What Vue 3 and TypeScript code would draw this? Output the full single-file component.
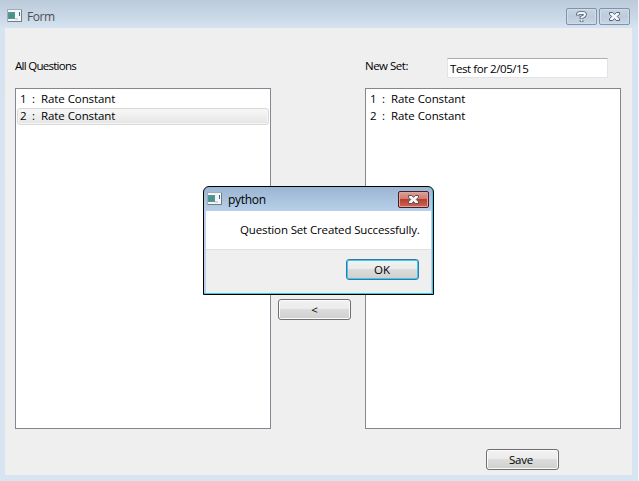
<script setup lang="ts">
import { ref } from 'vue'

interface Question {
  id: number
  title: string
}

const questions = ref<Question[]>([
  { id: 1, title: 'Rate Constant' },
  { id: 2, title: 'Rate Constant' },
])
const newSet = ref<Question[]>([...questions.value])
const selected = ref(2)
const setName = ref('Test for 2/05/15')
const closePath =
  'M1.5 1.5h3.2L6.5 3.4 8.3 1.5h3.2v1.7L9.3 5.5l2.2 2.3v1.7H8.3L6.5 7.6 4.7 9.5H1.5V7.8l2.2-2.3-2.2-2.3z'
</script>

<template>
  <div class="window">
    <header class="titlebar">
      <svg class="app-icon" width="16" height="14" viewBox="0 0 16 14">
        <rect x=".5" y=".5" width="14" height="12" fill="#f4f6f7" stroke="#a4abb2" />
        <path d="M14.5 1v11.5H1" fill="none" stroke="#747b83" />
        <rect x="1" y="3" width="7" height="7" fill="#5b8fae" />
        <path d="M2 9V6l3-2h2v5z" fill="#459a75" />
        <path d="M8 9h3v2H8z" fill="#d2d8da" />
        <path d="M12.5 3v4" stroke="#356b9b" />
      </svg>
      <span class="window-title">Form</span>
      <div class="controls">
        <button class="control" aria-label="Help">
          <svg width="13" height="12" viewBox="0 0 13 12">
            <path d="M3 4.5V3.2Q3 2 5 2h3q2 0 2 1.4T8.2 5.6L6.5 6.5V8M6.5 9v2" fill="none" stroke="#565f74" stroke-width="3.6" />
            <path d="M3 3.8V3.2Q3 2 5 2h3q2 0 2 1.4T8.2 5.6L6.5 6.5V7.6M6.5 9v1.6" fill="none" stroke="#f5f7fa" stroke-width="1.9" />
          </svg>
        </button>
        <button class="control" aria-label="Close">
          <svg width="13" height="11" viewBox="0 0 13 11">
            <path :d="closePath" fill="#f5f7fa" stroke="#565f74" />
          </svg>
        </button>
      </div>
    </header>

    <main class="client">
      <section class="column">
        <div class="heading"><span class="all-label">All Questions</span></div>
        <ul class="list">
          <li v-for="q in questions" :key="q.id" :class="{ selected: q.id === selected }">
            <span class="number">{{ q.id }}</span><span class="colon">:</span><span>{{ q.title }}</span>
          </li>
        </ul>
      </section>
      <div class="transfer"><button class="push">&lt;</button></div>
      <section class="column">
        <div class="heading">
          <span class="set-label">New Set:</span>
          <input v-model="setName" class="name-input" type="text" spellcheck="false" />
        </div>
        <ul class="list">
          <li v-for="q in newSet" :key="q.id">
            <span class="number">{{ q.id }}</span><span class="colon">:</span><span>{{ q.title }}</span>
          </li>
        </ul>
        <div class="save-row"><button class="push save">Save</button></div>
      </section>
    </main>

    <div class="dialog" role="dialog">
      <header class="dialog-title">
        <svg class="app-icon" width="16" height="14" viewBox="0 0 16 14">
          <rect x=".5" y=".5" width="14" height="12" fill="#f4f6f7" stroke="#a4abb2" />
          <path d="M14.5 1v11.5H1" fill="none" stroke="#747b83" />
          <rect x="1" y="3" width="7" height="7" fill="#5b8fae" />
          <path d="M2 9V6l3-2h2v5z" fill="#459a75" />
          <path d="M8 9h3v2H8z" fill="#d2d8da" />
          <path d="M12.5 3v4" stroke="#356b9b" />
        </svg>
        <span class="python">python</span>
        <button class="dialog-close" aria-label="Close">
          <svg width="13" height="11" viewBox="0 0 13 11">
            <path :d="closePath" fill="#f8f8f8" stroke="#56505c" />
          </svg>
        </button>
      </header>
      <div class="message"><span>Question Set Created Successfully.</span></div>
      <footer class="dialog-footer"><button class="push ok">OK</button></footer>
    </div>
  </div>
</template>

<style>
body {
  margin: 0;
  overflow: hidden;
  background: #fff;
}
</style>

<style scoped>
* {
  box-sizing: border-box;
}
.window {
  position: relative;
  width: 639px;
  height: 481px;
  padding: 0 6px 6px 5px;
  border-right: 1px solid #f5f8fb;
  background: linear-gradient(#bccbdb 0, #c7d5e4 14px, #d6e3f0 28px, #d7e4f1 100%);
  color: #000;
  font: 11.5px/17px 'Open Sans', 'Noto Sans', sans-serif;
}
button {
  margin: 0;
  padding: 0;
  font: inherit;
  color: inherit;
}
svg {
  display: block;
  flex: none;
}
.titlebar {
  display: flex;
  height: 28px;
  padding: 8px 2px 0 2px;
  align-items: flex-start;
}
.app-icon {
  margin-top: 1px;
}
.window-title {
  margin: 0 0 0 4px;
  color: #4d5055;
  font: 12px/17px 'Open Sans', sans-serif;
  letter-spacing: -0.4px;
}
.controls {
  display: flex;
  gap: 2px;
  margin-left: auto;
}
.control {
  display: flex;
  width: 31px;
  height: 17px;
  align-items: center;
  justify-content: center;
  border: 1px solid #8292ad;
  border-radius: 2px;
  background: linear-gradient(#c6d3e2, #bdccdc 50%, #c8d6e5);
  box-shadow: inset 0 0 0 1px #d0dce8;
}
.client {
  display: flex;
  height: 447px;
  padding: 28px 11px 0 10px;
  background: #efefef;
}
.column {
  width: 256px;
}
.heading {
  display: flex;
  height: 32px;
  align-items: flex-start;
}
.all-label,
.set-label {
  margin-top: 1px;
  white-space: nowrap;
}
.all-label {
  letter-spacing: -0.72px;
}
.set-label {
  width: 82px;
  letter-spacing: -0.5px;
}
.name-input {
  width: 161px;
  height: 20px;
  margin: 2px 0 0;
  padding: 1px 2px;
  border: 1px solid #e2e3ea;
  border-top-color: #abadb3;
  border-radius: 1px;
  outline: 0;
  background: #fff;
  color: #000;
  font: inherit;
  letter-spacing: -0.42px;
}
.list {
  height: 341px;
  margin: 0;
  padding: 2px 1px;
  border: 1px solid #828790;
  background: #fff;
  list-style: none;
}
.list li {
  display: flex;
  height: 17px;
  padding: 0 2px;
  border: 1px solid transparent;
  line-height: 13px;
  white-space: nowrap;
  letter-spacing: -0.08px;
}
.number {
  width: 12px;
}
.colon {
  width: 9px;
}
.list li.selected {
  border-color: #d9d9d9;
  border-radius: 3px;
  background: linear-gradient(#f8f8f8, #e5e5e5);
  box-shadow: inset 0 0 0 1px #f4f4f4;
}
.transfer {
  width: 94px;
  padding: 243px 0 0 7px;
}
.push {
  display: block;
  width: 73px;
  height: 21px;
  padding: 0 0 1px;
  border: 1px solid #707070;
  border-radius: 3px;
  background: linear-gradient(#f2f2f2 0, #ebebeb 49%, #dcdcdc 50%, #cfcfcf 100%);
  box-shadow: inset 0 0 0 1px #fbfbfb;
  line-height: 17px;
  text-align: center;
}
.save-row {
  padding: 20px 0 0 121px;
}
.save {
  padding-right: 3px;
  letter-spacing: -0.2px;
}
.dialog {
  position: absolute;
  top: 186px;
  left: 203px;
  width: 231px;
  height: 109px;
  padding: 0 1px 1px;
  border: 1px solid #000;
  border-radius: 6px 6px 0 0;
  background: linear-gradient(#9ab5d2, #b9d1ea 25px);
  box-shadow: inset -1px -1px #38c9ef;
}
.dialog-title {
  display: flex;
  height: 24px;
  padding: 4px 3px 0 2px;
}
.python {
  margin-left: 5px;
  font: 12px/17px 'Open Sans', sans-serif;
  letter-spacing: -0.3px;
}
.dialog-close {
  display: flex;
  width: 31px;
  height: 17px;
  margin-left: auto;
  align-items: center;
  justify-content: center;
  border: 1px solid #4c1d27;
  border-radius: 2px;
  background: linear-gradient(#dda197 0, #ce7a6d 48%, #b83f2b 50%, #cb6658 100%);
  box-shadow: inset 0 0 0 1px #dda49b;
}
.message {
  height: 39px;
  margin: 0 1px;
  padding: 10px 0 0 34px;
  border-bottom: 1px solid #dfdfdf;
  background: #fff;
  white-space: nowrap;
  letter-spacing: -0.14px;
}
.dialog-footer {
  height: 43px;
  margin: 0 1px;
  padding: 9px 0 0 140px;
  background: #efefef;
}
.ok {
  padding-right: 1px;
  border-color: #347ba3;
  box-shadow: inset 0 0 0 1px #41c7ee;
}
</style>
